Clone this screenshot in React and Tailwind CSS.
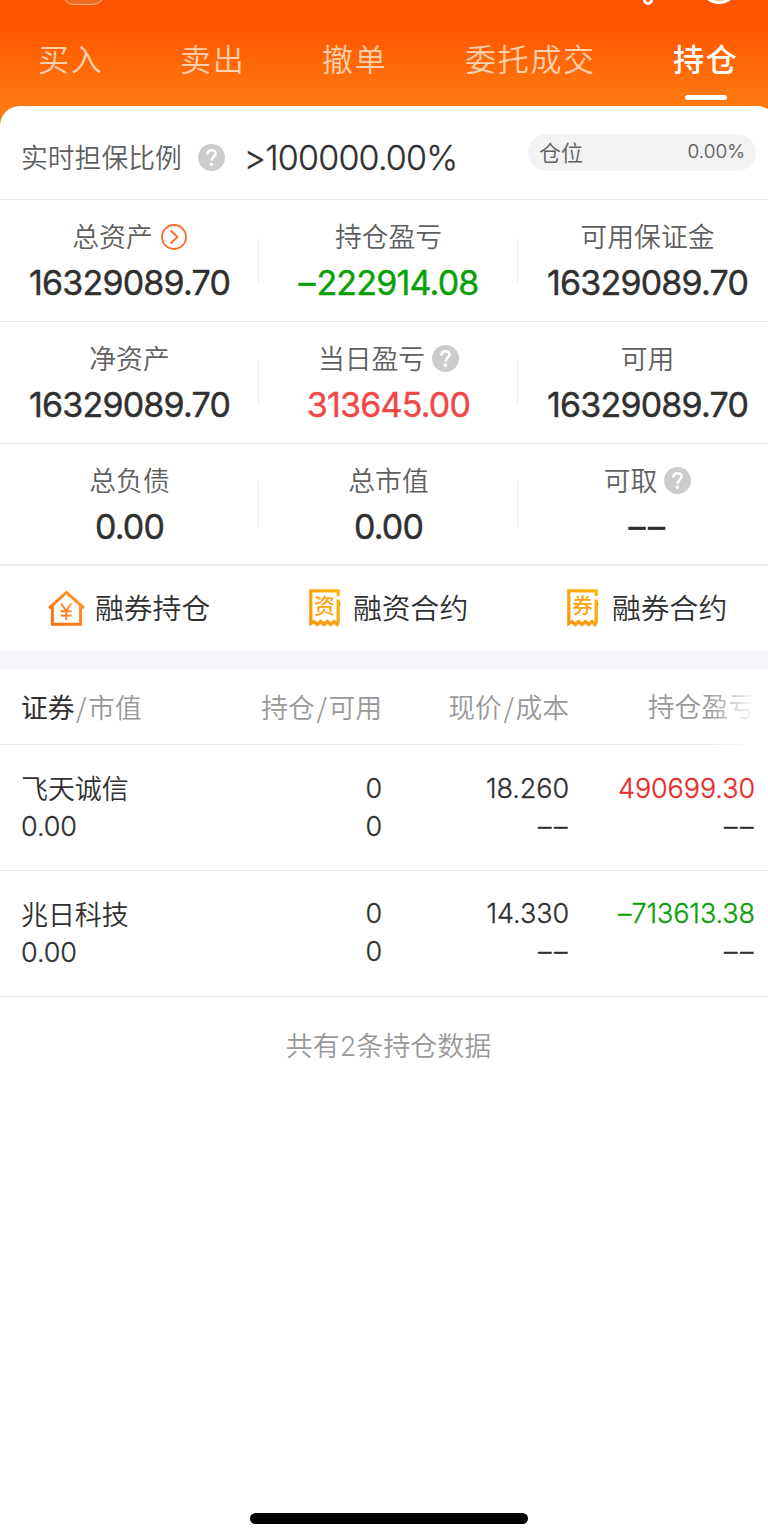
import React from "react";

const QuestionIcon = ({ className = "" }) => (
  <svg viewBox="0 0 27 27" className={`size-[27px] shrink-0 ${className}`}>
    <circle cx="13.5" cy="13.5" r="13.5" fill="#cccccc" />
    <path
      d="M9.4 10.5C9.5 7.8 11.2 6.3 13.5 6.3C15.9 6.3 17.5 7.8 17.5 9.8C17.5 12.5 13.6 12.9 13.6 16.6"
      fill="none"
      stroke="#fff"
      strokeWidth="2.6"
    />
    <circle cx="13.5" cy="20.3" r="1.8" fill="#fff" />
  </svg>
);

const ArrowIcon = ({ className = "" }) => (
  <svg
    viewBox="0 0 26 26"
    className={`size-[26px] shrink-0 ${className}`}
    fill="none"
    stroke="#ff6a20"
  >
    <circle cx="13" cy="13" r="12" strokeWidth="1.8" />
    <path d="M9.5 6.5L16.5 13L9.5 19.5" strokeWidth="1.8" />
  </svg>
);

const HouseIcon = () => (
  <svg viewBox="0 0 37 37" className="w-[37px] h-[37px]" fill="none">
    <defs>
      <linearGradient id="house" x1="0" y1="1" x2="1" y2="0">
        <stop offset="0" stopColor="#ff6a10" />
        <stop offset="1" stopColor="#ff9c2e" />
      </linearGradient>
    </defs>
    <g stroke="url(#house)">
      <path
        d="M1 18.2L18.5 2.4L36 18.2M4.4 15.5V34.2H32.6V15.5"
        strokeWidth="3"
      />
      <path
        d="M13 13.5L18.2 20.5L23.5 13.5M18.2 20V30M12.8 21.2H23.7M12.8 25.6H23.7"
        strokeWidth="1.9"
      />
    </g>
  </svg>
);

const BillIcon = ({ char }) => (
  <div className="relative w-[32px] h-[38px]">
    <svg viewBox="0 0 32 38" className="w-[32px] h-[38px]" fill="none">
      <defs>
        <linearGradient id="bill" x1="0" y1="1" x2="1" y2="0">
          <stop offset="0" stopColor="#fb9410" />
          <stop offset="1" stopColor="#ffb70c" />
        </linearGradient>
      </defs>
      <path
        d="M29.2 7V1.8H1.8V34.5L5 32.5L8.3 35.5L11.6 32.5L15 35.5L18.3 32.5L21.6 35.5L25 32.5L28 35.5L29.2 33V10.5"
        stroke="url(#bill)"
        strokeWidth="3.2"
      />
      <path d="M28 10L32 15L30 19H28Z" fill="#ffab0c" />
    </svg>
    <span className="absolute left-[5px] top-[5px] text-[21px] leading-[24px] font-medium text-[#fda50f]">
      {char}
    </span>
  </div>
);

const Dashes = () => (
  <span className="-mr-[1px] inline-block pt-[2px] leading-none tracking-[2.5px]">
    ––
  </span>
);

const summary = [
  [
    { label: "总资产", value: "16329089.70", icon: "arrow" },
    { label: "持仓盈亏", value: "222914.08", minus: true, color: "text-[#09a009]" },
    { label: "可用保证金", value: "16329089.70" },
  ],
  [
    { label: "净资产", value: "16329089.70" },
    {
      label: "当日盈亏",
      value: "313645.00",
      color: "text-[#f04848]",
      icon: "question",
    },
    { label: "可用", value: "16329089.70" },
  ],
  [
    { label: "总负债", value: "0.00" },
    { label: "总市值", value: "0.00" },
    { label: "可取", value: <Dashes />, icon: "question" },
  ],
];

const holdings = [
  {
    name: "飞天诚信",
    price: "18.260",
    profit: "490699.30",
    color: "text-[#e82c2c]",
    offset: "",
  },
  {
    name: "兆日科技",
    price: "14.330",
    profit: "–713613.38",
    color: "text-[#09a009]",
    offset: "-mt-px",
  },
];

const Header = () => (
  <header className="relative h-[126px] overflow-hidden bg-linear-to-b from-[#ff5500] from-20% to-[#ff8214] text-[31px] font-[350] tracking-[1.7px] text-[#ffd0ad]">
    <div className="absolute left-[62px] -top-[23px] w-[43px] h-[28px] rounded-[12px] border border-[#ffb480] bg-[#f06a20]" />
    <div className="absolute left-[643px] -top-[5px] size-[10px] rounded-full border-[3px] border-white" />
    <div className="absolute left-[700px] -top-[34px] size-[38px] rounded-full border-[3px] border-white bg-[#e8b090]" />
    <nav className="flex h-[106px] pl-[38px] pt-[37px] leading-[46px]">
      <span className="w-[142px]">买入</span>
      <span className="w-[142px]">卖出</span>
      <span className="w-[143px]">撤单</span>
      <span className="w-[208px]">委托成交</span>
      <div className="flex flex-col items-center font-medium text-white">
        <span>持仓</span>
        <div className="mt-[12px] w-[42px] h-[5px] shrink-0 rounded-full bg-white" />
      </div>
    </nav>
  </header>
);

const SummaryCell = ({ item, last }) => (
  <div className="relative flex flex-1 flex-col items-center pt-[16px]">
    <div className="flex h-[41px] items-center text-[26.8px] font-[350] text-[#606060]">
      <span className="pt-[2px]">{item.label}</span>
      {item.icon === "arrow" && <ArrowIcon className="ml-[8px]" />}
      {item.icon === "question" && <QuestionIcon className="ml-[7px]" />}
    </div>
    <div
      className={`mt-[4px] text-[34px] leading-[44px] font-normal tracking-[-0.8px] [-webkit-text-stroke:0.4px_currentColor] ${item.color || "text-[#303030]"}`}
    >
      {item.minus && <span className="tracking-[1px]">–</span>}
      {item.value}
    </div>
    {!last && (
      <div className="absolute right-0 top-[38px] w-px h-[45px] bg-[#ececec]" />
    )}
  </div>
);

const Pair = ({ left, right }) => (
  <>
    {left}
    <span className="mx-[1.5px] font-['Noto_Sans_CJK_SC',sans-serif]">/</span>
    {right}
  </>
);

const App = () => {
  return (
    <div className="w-full h-[1539px] overflow-hidden">
      <div className="flex h-full w-[777px] flex-col bg-white font-['Inter','Noto_Sans_CJK_SC',sans-serif] text-[#303030] [font-feature-settings:'calt'_0]">
        <Header />

        <main className="relative -mt-[20px] flex flex-1 flex-col rounded-t-[20px] bg-white">
          {/* Guarantee ratio */}
          <div className="flex h-[94px] items-center border-b border-[#ebebeb] pl-[21px] pr-[21px] pt-[9px]">
            <span className="pt-[3px] text-[26.8px] font-[350] text-[#606060]">
              实时担保比例
            </span>
            <QuestionIcon className="ml-[16px]" />
            <span className="ml-[19px] text-[34px] font-[350] tracking-[-0.8px] [-webkit-text-stroke:0.3px_currentColor]">
              &gt;100000.00%
            </span>
            <div className="ml-auto -mt-[10px] flex h-[37px] w-[228px] items-center justify-between rounded-full bg-[#f3f3f3] px-[11px] font-[350] text-[#606060]">
              <span className="pt-[2px] text-[22px]">仓位</span>
              <span className="pt-px text-[19px] [-webkit-text-stroke:0.2px_currentColor]">
                0.00%
              </span>
            </div>
          </div>

          {/* Assets */}
          {summary.map((row, i) => (
            <div
              key={i}
              className={`flex h-[122px] border-[#ebebeb] ${i === 2 ? "border-b-2" : "border-b"}`}
            >
              {row.map((item, j) => (
                <SummaryCell key={item.label} item={item} last={j === 2} />
              ))}
            </div>
          ))}

          {/* Contracts */}
          <div className="flex h-[84px] items-center text-[28.8px] font-[350]">
            <div className="flex w-[260px] items-center gap-[10px] pl-[48px]">
              <HouseIcon />
              <span className="pt-[2px]">融券持仓</span>
            </div>
            <div className="flex w-[259px] items-center gap-[12px] pl-[49px]">
              <BillIcon char="资" />
              <span className="pt-[2px]">融资合约</span>
            </div>
            <div className="flex items-center gap-[13px] pl-[48px]">
              <BillIcon char="券" />
              <span className="pt-[2px]">融券合约</span>
            </div>
          </div>

          <div className="h-[19px] bg-[#f6f7fa]" />

          {/* Holdings */}
          <div className="relative flex h-[76px] items-center border-b border-[#ebebeb] pl-[21px] pt-[2px] text-[26.8px] font-[350] text-[#999]">
            <div className="w-[161px]">
              <Pair
                left={<span className="font-normal text-[#303030]">证券</span>}
                right="市值"
              />
            </div>
            <div className="w-[200px] text-right">
              <Pair left="持仓" right="可用" />
            </div>
            <div className="w-[187px] text-right">
              <Pair left="现价" right="成本" />
            </div>
            <div className="w-[186px] text-right">持仓盈亏</div>
            <div className="absolute right-[9px] top-0 h-[77px] w-[60px] bg-linear-to-r from-white/0 to-white to-80%" />
          </div>
          {holdings.map((row) => (
            <div
              key={row.name}
              className="flex h-[126px] border-b border-[#ebebeb] pl-[21px] pt-[25px] text-[27px] leading-[38px] font-[350] tracking-[-0.1px]"
            >
              <div className="w-[161px]">
                <div className="pt-px leading-[37px]">{row.name}</div>
                <div className="[-webkit-text-stroke:0.3px_currentColor]">
                  0.00
                </div>
              </div>
              <div
                className={`flex text-right [-webkit-text-stroke:0.3px_currentColor] ${row.offset}`}
              >
                <div className="w-[200px]">
                  <div>0</div>
                  <div>0</div>
                </div>
                <div className="w-[187px]">
                  <div>{row.price}</div>
                  <div>
                    <Dashes />
                  </div>
                </div>
                <div className="w-[186px]">
                  <div className={row.color}>{row.profit}</div>
                  <div>
                    <Dashes />
                  </div>
                </div>
              </div>
            </div>
          ))}

          <p className="mt-[30px] text-center text-[27px] leading-[40px] font-[350] text-[#999]">
            共有2条持仓数据
          </p>

          <div className="mx-auto mb-[15px] mt-auto h-[11px] w-[278px] rounded-full bg-black" />
        </main>
      </div>
    </div>
  );
};

export default App;
